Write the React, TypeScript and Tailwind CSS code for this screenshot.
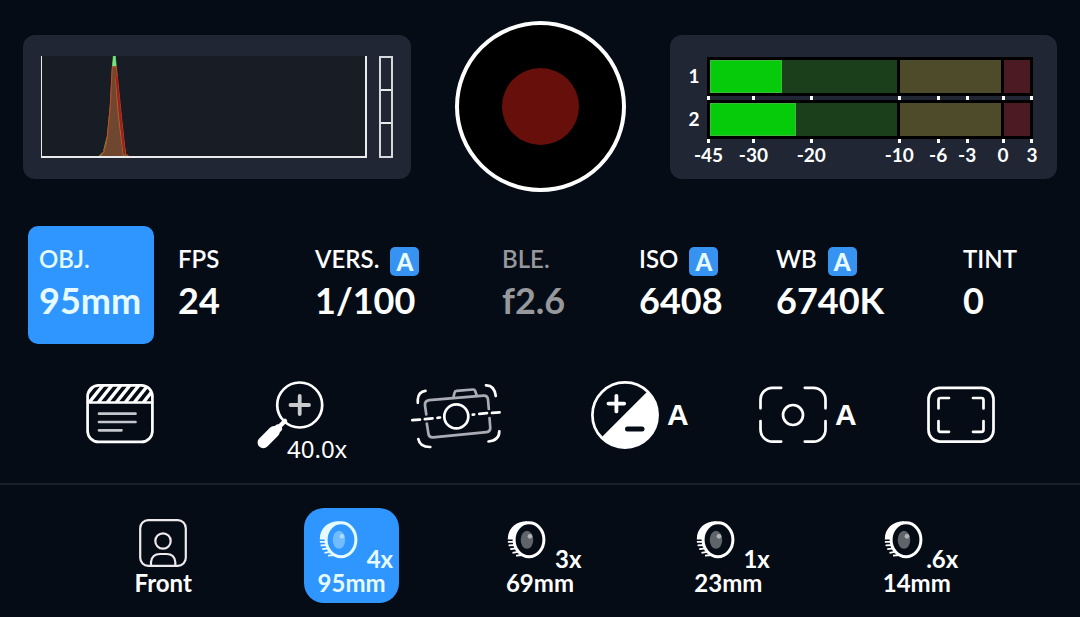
import React from 'react'
import clsx from 'clsx'

const params = [
  { label: 'OBJ.', value: '95mm', active: true },
  { label: 'FPS', value: '24' },
  { label: 'VERS.', value: '1/100', auto: true },
  { label: 'BLE.', value: 'f2.6', disabled: true },
  { label: 'ISO', value: '6408', auto: true },
  { label: 'WB', value: '6740K', auto: true },
  { label: 'TINT', value: '0' },
]

const lenses = [
  { zoom: '4x', focal: '95mm', active: true },
  { zoom: '3x', focal: '69mm' },
  { zoom: '1x', focal: '23mm' },
  { zoom: '.6x', focal: '14mm' },
]

const channels = [
  { name: '1', level: 38.5 },
  { name: '2', level: 46 },
]

const scale = ['-45', '-30', '-20', '-10', '-6', '-3', '0', '3']

const Histogram = () => (
  <div className="flex h-36 gap-3 rounded-xl bg-[#202634] px-[18px] py-[21px]">
    <div className="min-w-0 flex-1 border-b-2 border-l border-r-2 border-[#e8eaec] bg-[#181c24]">
      <svg className="h-full w-full" viewBox="0 0 321 100" preserveAspectRatio="none">
        <path d="M57 100 L61 96 L65 80 L68 50 L70 12 L71 0 L73 0 L74 16 L78 60 L84 100 Z" fill="#5f9b4a" />
        <path d="M57 100 L61 96 L65 80 L68 50 L70 12 L71 0 L73 0 L74 12" fill="none" stroke="#3fae3f" strokeWidth="1" />
        <path d="M71 0 H73 L74 10 H70 Z" fill="#7be084" />
        <path d="M59 100 L64 88 L67 60 L70 11 L74 10 L79 60 L83 99 L86 100 Z" fill="#6f4630" />
        <path d="M58 100 L62 96 L65 82 L68 50 L70 11 H74 L79 60 L83 98 L86 100" fill="none" stroke="#cc4422" strokeWidth="1" />
        <path d="M73 20 L76 60 L81 100" fill="none" stroke="#b0622e" strokeWidth="1" />
        <path d="M74 20 L78 60 L82 98" fill="none" stroke="#a01f1a" strokeWidth="2" />
      </svg>
    </div>
    <div className="flex w-3.5 flex-col divide-y-2 divide-[#e8eaec] border-2 border-[#d5d8dc]">
      <div className="flex-1" />
      <div className="flex-1" />
      <div className="flex-1" />
    </div>
  </div>
)

const Ticks = ({ labels = false }) => (
  <div className="grid grid-cols-[45fr_58fr_88fr_39fr_29fr_36fr_29fr_0px] pl-0.5 pr-px">
    {scale.map((mark) => (
      <div key={mark} className="flex w-0 flex-col items-center">
        <div className="h-1 w-[3px] shrink-0 bg-white" />
        {labels && <span className="mt-0.5 text-[19px] font-bold leading-5">{mark}</span>}
      </div>
    ))}
  </div>
)

const AudioMeter = () => (
  <div className="h-36 rounded-xl bg-[#202634] pl-[19px] pr-6 pt-[22px]">
    {channels.map((channel, i) => (
      <div key={channel.name} className="grid grid-cols-[10px_1fr] gap-x-2">
        <span className="self-center text-[19px] font-bold leading-5">{channel.name}</span>
        <div className="grid h-[39px] grid-cols-[188fr_101fr_26fr] gap-[3px] bg-black p-[3px]">
          <div className="bg-[#1c3f1b]">
            <div className="h-full border border-[#3dbb3d] bg-[#06cb0a]" style={{ width: `${channel.level}%` }} />
          </div>
          <div className="bg-[#4d4b2a]" />
          <div className="bg-[#4c1a23]" />
        </div>
        <div className="col-start-2">
          <Ticks labels={i === channels.length - 1} />
        </div>
      </div>
    ))}
  </div>
)

const ToolButton = ({ label, children }: { label: string; children: React.ReactNode }) => (
  <button aria-label={label} className="relative mx-auto h-[84px] w-28">
    {children}
  </button>
)

const Drawing = ({ children }: { children: React.ReactNode }) => (
  <svg
    className="h-[84px] w-28"
    viewBox="0 0 112 84"
    fill="none"
    stroke="#fff"
    strokeWidth="2.7"
    strokeLinecap="round"
    strokeLinejoin="round"
  >
    {children}
  </svg>
)

const AutoMark = () => (
  <span className="absolute left-[99px] top-[21px] font-['Liberation_Sans',Arial,sans-serif] text-[30px] font-bold leading-8">
    A
  </span>
)

const Tools = () => (
  <div className="mt-[34px] grid grid-cols-6 px-9">
    <ToolButton label="Slate">
      <Drawing>
        <clipPath id="slate-top">
          <path d="M24 24.5 V18.5 a11 11 0 0 1 11-11 h42 a11 11 0 0 1 11 11 V24.5 Z" />
        </clipPath>
        <g clipPath="url(#slate-top)" strokeWidth="3.4" strokeLinecap="butt">
          <path d="M15 26 L31 6 M24 26 L40 6 M33 26 L49 6 M42 26 L58 6 M51 26 L67 6 M60 26 L76 6 M69 26 L85 6 M78 26 L94 6" />
        </g>
        <rect x="23.6" y="7.3" width="64.8" height="56.6" rx="11" />
        <path d="M24 24.5 H88" />
        <path d="M35 35.7 H71.5 M35 44 H71.5 M35 52.3 H57.5" stroke="#c3c7cd" />
      </Drawing>
    </ToolButton>

    <ToolButton label="Focus zoom">
      <Drawing>
        <circle cx="67.7" cy="27" r="22.5" />
        <path d="M58.5 27 H77 M67.7 18 V36" stroke="#c8cacc" strokeWidth="3.8" />
        <path d="M53 43 L45 51" strokeWidth="4.5" />
        <path d="M39 56.5 L46 50.5" strokeWidth="8" />
        <path d="M31.3 64.5 L42 53.8" strokeWidth="11.5" />
      </Drawing>
      <span className="absolute left-[55px] top-[57px] font-['Noto_Sans',sans-serif] text-2xl leading-7">40.0x</span>
    </ToolButton>

    <ToolButton label="Stabilization">
      <Drawing>
        <g stroke="#a9acb5">
          <path d="M26.3 36.5 L25 27.5 Q24.7 22.7 29.2 22.2 L83.5 17.6 Q87.6 17.4 88 21.5 L88.8 31" />
          <path d="M89.5 40 L90.3 50 Q90.3 53.7 86.5 54.1 L33 59.3 Q28.8 59.4 28.4 55.5 L26.8 45.5" />
          <path d="M53.3 19.8 L54.6 14.5 Q55 13 56.5 12.9 L73 11.5 Q74.6 11.4 75.2 13 L76.8 17.8" />
        </g>
        <circle cx="56.3" cy="38.4" r="12" />
        <path d="M12.3 42.2 L20 41.6 M24.8 41.1 L32.5 40.3 M37.5 39.8 L40 39.5 M72.8 36.7 L74.2 36.5 M79.3 35.8 L87 35.1 M92 34.9 L99.6 34.3" />
        <path d="M17.8 24.8 V21.5 Q18.3 13.5 25.5 12.8 M86 7.3 Q94.3 7 95.8 18 M99.3 53.3 Q99.3 62.5 88.5 63.5 M18.3 61 Q20 69.2 30.3 69" />
      </Drawing>
    </ToolButton>

    <ToolButton label="Exposure compensation">
      <Drawing>
        <circle cx="57" cy="37" r="32.6" />
        <path d="M33.9 58.9 L78.9 13.9 L80 14 A32.6 32.6 0 0 1 80 60 A32.6 32.6 0 0 1 34 60 Z" fill="#fff" stroke="none" />
        <path d="M40.5 25.6 H56.2 M48.4 17.8 V33.4" strokeWidth="3.8" />
        <path d="M59.5 51 H74" stroke="#050c16" strokeWidth="5" />
      </Drawing>
      <AutoMark />
    </ToolButton>

    <ToolButton label="Metering">
      <Drawing>
        <path d="M24.5 30.3 V21.8 a12 12 0 0 1 12-12 h8.7 M68.8 9.8 h8.7 a12 12 0 0 1 12 12 V30.3 M89.5 43 V51.6 a12 12 0 0 1-12 12 H68.8 M45.2 63.6 H36.5 a12 12 0 0 1-12-12 V43" />
        <circle cx="57" cy="37" r="10" />
      </Drawing>
      <AutoMark />
    </ToolButton>

    <ToolButton label="Frame guides">
      <Drawing>
        <rect x="24.5" y="9.8" width="65" height="53.8" rx="11.5" />
        <path d="M34.5 30.4 V22 a2 2 0 0 1 2-2 H45 M69 20 h8.5 a2 2 0 0 1 2 2 V30.4 M79.5 43 V51.8 a2 2 0 0 1-2 2 H69 M45 53.8 H36.5 a2 2 0 0 1-2-2 V43" />
      </Drawing>
    </ToolButton>
  </div>
)

const LensIcon = () => (
  <svg className="h-10 w-10" viewBox="0 0 40 40" fill="none" stroke="currentColor">
    <path d="M20 1.3 C9 1.3 0.8 8 0.8 19.5 H8 C8 11 13 4 22 3.5 Z" fill="currentColor" stroke="none" />
    <path d="M0.9 21.8 H8 M1.6 25.3 L9 25 M3.2 29.2 L10 28.4 M5.5 32.8 L12 31.6 M9 35.6 L16 35" strokeWidth="1.8" />
    <ellipse cx="22" cy="19.8" rx="14.9" ry="17" strokeWidth="3" />
    <ellipse cx="20" cy="19.8" rx="6.3" ry="9" fill="currentColor" fillOpacity="0.36" stroke="none" />
    <circle cx="23" cy="16.3" r="2.4" fill="currentColor" fillOpacity="0.5" stroke="none" />
  </svg>
)

const LensPicker = () => (
  <div className="grid grid-cols-5 justify-items-center px-[69px] pb-3.5 pt-[23px] text-2xl font-bold leading-6">
    <button className="flex h-[95px] w-[95px] flex-col items-center pt-[11px]">
      <svg className="h-12 w-12 shrink-0" viewBox="0 0 48 48" fill="none" stroke="#eee9ec" strokeWidth="2.2">
        <rect x="1.2" y="1.2" width="45.6" height="45.6" rx="8" />
        <circle cx="24" cy="22" r="7.7" />
        <path d="M12 46.5 V43 Q13 35 21 35 H27.5 Q35.5 35 36.3 43 V46.5" />
      </svg>
      <span className="mt-1">Front</span>
    </button>
    {lenses.map((lens) => (
      <button
        key={lens.focal}
        className={clsx(
          'flex h-[95px] w-[95px] flex-col rounded-[20px] pt-3',
          lens.active && 'bg-[#3096ff] text-[#e6fbff]',
        )}
      >
        <span className="flex h-[51px] w-full items-start justify-between pl-[15px] pr-1.5">
          <LensIcon />
          <span className="self-end">{lens.zoom}</span>
        </span>
        <span className="self-center">{lens.focal}</span>
      </button>
    ))}
  </div>
)

export default function App() {
  return (
    <main className="min-h-screen bg-[#050c16] font-[Lato,sans-serif] text-white">
      <div className="grid grid-cols-[1fr_171px_1fr] items-center gap-x-11 px-[23px] pt-[21px]">
        <Histogram />
        <button
          aria-label="Record"
          className="flex aspect-square items-center justify-center rounded-full border-4 border-white bg-black"
        >
          <span className="h-[77px] w-[77px] rounded-full bg-[#670f0b]" />
        </button>
        <AudioMeter />
      </div>

      <div className="mt-[34px] grid grid-cols-[126fr_124fr_174fr_124fr_124fr_174fr_100fr] gap-x-[13px] px-7">
        {params.map((param) => (
          <button
            key={param.label}
            disabled={param.disabled}
            className={clsx(
              'flex h-[118px] min-w-0 flex-col items-start whitespace-nowrap rounded-[10px] px-[11px] pt-[21px]',
              param.active && 'bg-[#3096ff] text-[#e6fbff]',
              param.disabled && 'text-[#97989c]',
            )}
          >
            <span className="flex h-[29px] gap-[11px] text-2xl font-semibold leading-6">
              {param.label}
              {param.auto && (
                <span className="w-[29px] rounded-[5px] bg-[#3793f2] text-center font-black leading-[29px] text-[#e6fbff]">
                  A
                </span>
              )}
            </span>
            <span className="mt-1.5 text-4xl font-bold leading-9">{param.value}</span>
          </button>
        ))}
      </div>

      <Tools />

      <hr className="mt-[21px] border-t-2 border-[#1a202b]" />

      <LensPicker />
    </main>
  )
}
